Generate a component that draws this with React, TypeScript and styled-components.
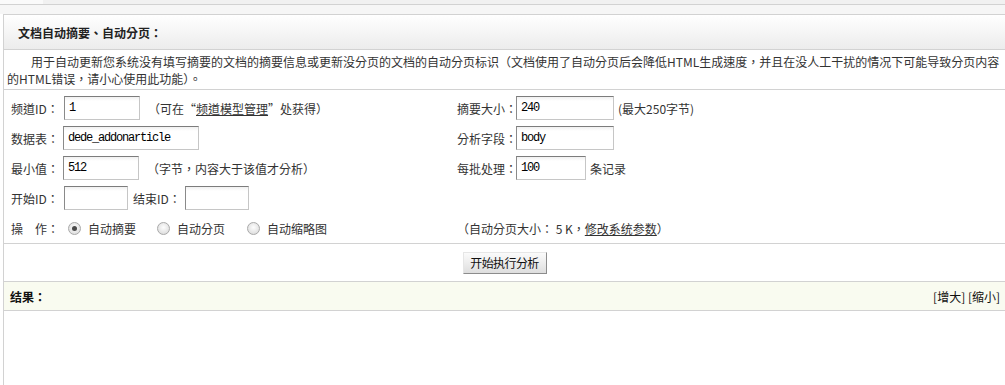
import styled, { createGlobalStyle } from "styled-components";

const colors = {
  line: "#d2d2d2",
  text: "#333",
  resultBg: "#f9fbf0",
};

const GlobalStyle = createGlobalStyle`
  html, body {
    margin: 0;
    padding: 0;
    background: #fff;
    overflow: hidden;
  }
  body {
    font-family: "Noto Sans CJK TC", "Noto Sans CJK SC", sans-serif;
    font-size: 12px;
    color: ${colors.text};
  }
`;

const TopStrip = styled.div`
  height: 4px;
  background: #f1f1f1;
  border-bottom: 1px solid ${colors.line};
`;

const TopTab = styled.div`
  width: 43px;
  height: 100%;
  background: #fafafa;
`;

const TopGap = styled.div`
  height: 9px;
  background: #f6f6f6;
`;

const Frame = styled.div`
  margin-left: 3px;
  width: 1001px;
  border-left: 1px solid ${colors.line};
  border-top: 1px solid ${colors.line};
`;

const TitleBar = styled.div`
  height: 34px;
  display: flex;
  align-items: center;
  padding-left: 14px;
  background: linear-gradient(#ffffff, #ececec);
  border-bottom: 1px solid ${colors.line};
  font-weight: bold;
  color: #222;
`;

const Intro = styled.div`
  height: 34px;
  padding: 3px 3px 2px 3px;
  line-height: 17px;
  text-indent: 24px;
  border-bottom: 1px solid ${colors.line};
`;

const FormGrid = styled.div`
  display: grid;
  grid-template-columns: 446px 1fr;
  grid-auto-rows: 30px;
  padding: 3px 0 0 7px;
  border-bottom: 1px solid ${colors.line};
`;

const Cell = styled.div`
  display: flex;
  align-items: center;
  white-space: nowrap;
`;

const Label = styled.span<{ $w: number; $ml?: number }>`
  display: inline-block;
  width: ${(p) => p.$w}px;
  margin-left: ${(p) => p.$ml ?? 0}px;
`;

const TextInput = styled.input<{ $w: number }>`
  box-sizing: border-box;
  width: ${(p) => p.$w}px;
  height: 24px;
  margin: 0;
  padding: 0 4px;
  border: 1px solid;
  border-color: #7c7c7c #c6c6c6 #c6c6c6 #8a8a8a;
  background: linear-gradient(#f0f0f0, #fff 4px);
  font-family: "Liberation Mono", monospace;
  font-size: 12px;
  letter-spacing: -1.2px;
  color: #000;
  outline: none;
`;

const Note = styled.span<{ $ml: number }>`
  margin-left: ${(p) => p.$ml}px;
`;

const Link = styled.a`
  color: ${colors.text};
  text-decoration: underline;
`;

const Radio = styled.input.attrs({ type: "radio" })`
  appearance: none;
  box-sizing: border-box;
  width: 13px;
  height: 13px;
  margin: 0 0 0 4px;
  border-radius: 50%;
  border: 1px solid #a9a9a9;
  background: radial-gradient(circle at 50% 40%, #fdfdfd, #d6d6d6);
  position: relative;

  &:checked::after {
    content: "";
    position: absolute;
    left: 3px;
    top: 3px;
    width: 5px;
    height: 5px;
    border-radius: 50%;
    background: #4a4a4a;
  }
`;

const RadioText = styled.span<{ $mr: number }>`
  margin-left: 7px;
  margin-right: ${(p) => p.$mr}px;
`;

const ActionRow = styled.div`
  height: 37px;
  display: flex;
  align-items: center;
  justify-content: center;
  border-bottom: 1px solid ${colors.line};
`;

const Button = styled.button`
  box-sizing: border-box;
  width: 84px;
  height: 22px;
  padding: 0;
  border: 1px solid;
  border-color: #e6e6e6 #8c8c8c #8c8c8c #e6e6e6;
  background: linear-gradient(#fbfbfb, #dedede);
  font-family: "Noto Sans CJK SC", sans-serif;
  font-size: 12px;
  letter-spacing: -0.6px;
  color: #111;
`;

const ResultBar = styled.div`
  height: 28px;
  display: flex;
  align-items: center;
  justify-content: space-between;
  padding: 0 5px 0 6px;
  background: ${colors.resultBg};
  border-bottom: 1px solid ${colors.line};
`;

const ResultTitle = styled.span`
  font-weight: bold;
  color: #111;
`;

const ResultTools = styled.span`
  color: #111;
`;

const ResultBody = styled.div`
  height: 90px;
`;

export default function App() {
  return (
    <>
      <GlobalStyle />
      <TopStrip>
        <TopTab />
      </TopStrip>
      <TopGap />
      <Frame>
        <TitleBar>文档自动摘要、自动分页：</TitleBar>
        <Intro>
          用于自动更新您系统没有填写摘要的文档的摘要信息或更新没分页的文档的自动分页标识（文档使用了自动分页后会降低HTML生成速度，并且在没人工干扰的情况下可能导致分页内容的HTML错误，请小心使用此功能）。
        </Intro>
        <FormGrid>
          <Cell>
            <Label $w={53}>频道ID：</Label>
            <TextInput $w={76} defaultValue="1" />
            <Note $ml={8}>
              （可在“<Link href="#">频道模型管理</Link>”处获得）
            </Note>
          </Cell>
          <Cell>
            <Label $w={59}>摘要大小：</Label>
            <TextInput $w={98} defaultValue="240" />
            <Note $ml={4}>(最大250字节)</Note>
          </Cell>

          <Cell>
            <Label $w={52}>数据表：</Label>
            <TextInput $w={136} defaultValue="dede_addonarticle" />
          </Cell>
          <Cell>
            <Label $w={59}>分析字段：</Label>
            <TextInput $w={98} defaultValue="body" />
          </Cell>

          <Cell>
            <Label $w={52}>最小值：</Label>
            <TextInput $w={76} defaultValue="512" />
            <Note $ml={8}>（字节，内容大于该值才分析）</Note>
          </Cell>
          <Cell>
            <Label $w={59}>每批处理：</Label>
            <TextInput $w={70} defaultValue="100" />
            <Note $ml={4}>条记录</Note>
          </Cell>

          <Cell>
            <Label $w={53}>开始ID：</Label>
            <TextInput $w={64} />
            <Label $w={52} $ml={5}>
              结束ID：
            </Label>
            <TextInput $w={64} />
          </Cell>
          <Cell />

          <Cell>
            <Label $w={53}>操　作：</Label>
            <Radio name="action" defaultChecked />
            <RadioText $mr={17}>自动摘要</RadioText>
            <Radio name="action" />
            <RadioText $mr={18}>自动分页</RadioText>
            <Radio name="action" />
            <RadioText $mr={0}>自动缩略图</RadioText>
          </Cell>
          <Cell>
            （自动分页大小： 5 K，<Link href="#">修改系统参数</Link>）
          </Cell>
        </FormGrid>
        <ActionRow>
          <Button>开始执行分析</Button>
        </ActionRow>
        <ResultBar>
          <ResultTitle>结果：</ResultTitle>
          <ResultTools>[增大] [缩小]</ResultTools>
        </ResultBar>
        <ResultBody />
      </Frame>
    </>
  );
}
